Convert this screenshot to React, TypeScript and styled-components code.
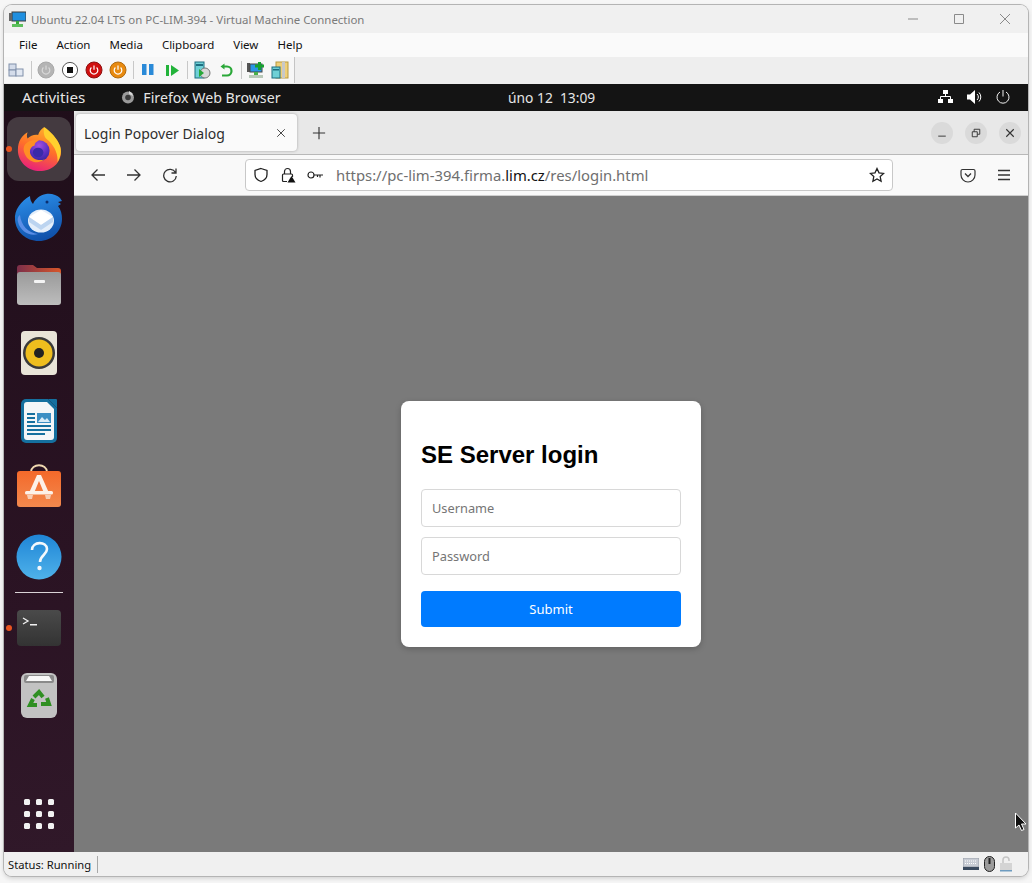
import React from 'react';
import styled, { createGlobalStyle } from 'styled-components';

const GlobalStyle = createGlobalStyle`
    html, body {
        margin: 0;
        padding: 0;
        background: #f4f4f4;
    }
    * {
        box-sizing: border-box;
    }
`;

const WIN_FONT = `"Noto Sans", "Open Sans", sans-serif`;
const UBUNTU_FONT = `"Noto Sans", "Open Sans", sans-serif`;

const Page = styled.div`
    width: 1032px;
    height: 883px;
    padding: 5px 4px 7px;
    overflow: hidden;
    background: #f6f6f6;
`;

const VmWindow = styled.div`
    position: relative;
    display: flex;
    flex-direction: column;
    height: 871px;
    border-radius: 8px;
    overflow: hidden;
    background: #f0f0f0;
    box-shadow: 0 0 0 1px #b4b4b4, 0 2px 5px rgba(0, 0, 0, 0.18);
`;

const TitleBar = styled.div`
    display: flex;
    align-items: center;
    height: 28px;
    flex: none;
    padding-left: 5px;
    background: #f0f0f0;
    font: 11.45px ${WIN_FONT};
    color: #7a7a7a;
`;

const TitleText = styled.span`
    margin-left: 5px;
    white-space: nowrap;
`;

const WinControls = styled.div`
    display: flex;
    margin-left: auto;
`;

const WinControl = styled.div`
    display: flex;
    align-items: center;
    justify-content: center;
    width: 46px;
    height: 28px;
`;

const MenuBar = styled.div`
    display: flex;
    align-items: center;
    gap: 19px;
    height: 24px;
    flex: none;
    padding: 0 0 2px 15px;
    background: #fafafa;
    font: 11.5px ${WIN_FONT};
    color: #111;
`;

const ToolStrip = styled.div`
    display: flex;
    height: 27px;
    flex: none;
    background: #eeeeee;
`;

const ToolGroup = styled.div`
    display: flex;
    align-items: center;
    height: 26px;
    padding-right: 2px;
    background: #f7f7f7;
    border-right: 1px solid #c4c4c4;
`;

const ToolSlot = styled.div`
    display: flex;
    align-items: center;
    justify-content: center;
    width: 24px;
    height: 24px;
`;

const ToolSep = styled.div`
    width: 1px;
    height: 18px;
    margin: 0 2px 0 3px;
    background: #c8c8c8;
`;

const Screen = styled.div`
    position: relative;
    display: flex;
    flex-direction: column;
    flex: 1;
    min-height: 0;
`;

const TopBar = styled.div`
    display: flex;
    align-items: center;
    position: relative;
    height: 27px;
    flex: none;
    padding: 0 0 1px 18px;
    background: #141414;
    font: 14.2px ${UBUNTU_FONT};
    color: #e6e6e6;
`;

const ActivitiesLabel = styled.span`
    font-size: 15.2px;
`;

const AppName = styled.div`
    display: flex;
    align-items: center;
    gap: 8px;
    margin-left: 36px;
`;

const Clock = styled.div`
    position: absolute;
    left: 504px;
    font-size: 13.8px;
    white-space: pre;
`;

const Tray = styled.div`
    display: flex;
    align-items: center;
    gap: 14px;
    margin-left: auto;
    margin-right: 18px;
`;

const Desktop = styled.div`
    display: flex;
    flex: 1;
    min-height: 0;
`;

const Dock = styled.div`
    display: flex;
    flex-direction: column;
    align-items: center;
    gap: 4px;
    width: 70px;
    flex: none;
    padding: 6px 0 0;
    background: linear-gradient(170deg, #1f0e1a 0%, #2a1323 60%, #301829 100%);
`;

const DockItem = styled.div<{ $active?: boolean }>`
    position: relative;
    display: flex;
    align-items: center;
    justify-content: center;
    width: 64px;
    height: 64px;
    flex: none;
    border-radius: 12px;
    background: ${({ $active }) => ($active ? '#443a40' : 'transparent')};
`;

const RunningDot = styled.span`
    position: absolute;
    left: -1px;
    top: 29px;
    width: 6px;
    height: 6px;
    border-radius: 50%;
    background: #e95420;
`;

const DockSep = styled.div`
    width: 48px;
    height: 1px;
    flex: none;
    margin: -1px 0;
    background: #d9d2d6;
`;

const AppGrid = styled.div`
    display: grid;
    grid-template-columns: repeat(3, 6px);
    grid-auto-rows: 6px;
    gap: 6px;
    margin-top: auto;
    margin-bottom: 23px;
`;

const GridDot = styled.span`
    border-radius: 1.5px;
    background: #f2f2f2;
`;

const Browser = styled.div`
    display: flex;
    flex-direction: column;
    flex: 1;
    min-width: 0;
`;

const TabBar = styled.div`
    display: flex;
    align-items: center;
    height: 44px;
    flex: none;
    padding-left: 2px;
    background: #e8e8e8;
    border-bottom: 1px solid #b8b8b8;
`;

const Tab = styled.div`
    display: flex;
    align-items: center;
    justify-content: space-between;
    width: 221px;
    height: 37px;
    padding: 1px 10px 0 8px;
    border-radius: 4px;
    background: #fafafa;
    box-shadow: 0 0 3px rgba(0, 0, 0, 0.3);
    font: 14px ${UBUNTU_FONT};
    color: #2e2e2e;
`;

const NewTab = styled.div`
    display: flex;
    margin-left: 15px;
`;

const TabControls = styled.div`
    display: flex;
    gap: 12px;
    margin-left: auto;
    margin-right: 7px;
`;

const RoundControl = styled.div`
    display: flex;
    align-items: center;
    justify-content: center;
    width: 22px;
    height: 22px;
    border-radius: 50%;
    background: #dadada;
`;

const NavBar = styled.div`
    display: flex;
    align-items: center;
    height: 41px;
    flex: none;
    padding-left: 6px;
    background: #f9f9f9;
    border-bottom: 1px solid #cfcfcf;
`;

const NavButton = styled.div`
    display: flex;
    align-items: center;
    justify-content: center;
    width: 36px;
    height: 32px;
`;

const UrlBar = styled.div`
    display: flex;
    align-items: center;
    width: 648px;
    height: 32px;
    margin-left: 57px;
    margin-right: 57px;
    padding: 0 7px 0 7px;
    border: 1px solid #c8c8c8;
    border-radius: 4px;
    background: #fff;
`;

const UrlIcons = styled.div`
    display: flex;
    align-items: center;
    gap: 11px;
    width: 83px;
    flex: none;
`;

const UrlText = styled.div`
    flex: 1;
    font: 14.85px ${UBUNTU_FONT};
    color: #6f6f6f;
    white-space: nowrap;
`;

const UrlHost = styled.span`
    color: #111;
`;

const Content = styled.div`
    display: flex;
    align-items: center;
    justify-content: center;
    flex: 1;
    background: #7a7a7a;
`;

const LoginCard = styled.form`
    display: flex;
    flex-direction: column;
    width: 300px;
    height: 246px;
    padding: 20px;
    border-radius: 8px;
    background: #fff;
    box-shadow: 0 2px 6px rgba(0, 0, 0, 0.2);
`;

const LoginTitle = styled.h2`
    margin: 20px 0 21px;
    font: bold 24px/27px "Liberation Sans", Arial, sans-serif;
    color: #000;
`;

const LoginInput = styled.input`
    width: 100%;
    height: 38px;
    flex: none;
    margin-bottom: 10px;
    padding: 0 10px;
    border: 1px solid #d8d8d8;
    border-radius: 4px;
    font: 12.8px ${UBUNTU_FONT};
    &::placeholder {
        color: #757575;
    }
`;

const SubmitButton = styled.button`
    height: 36px;
    flex: none;
    margin-top: 6px;
    border: 0;
    border-radius: 4px;
    background: #007bff;
    color: #fff;
    font: 13px ${UBUNTU_FONT};
`;

const StatusBar = styled.div`
    display: flex;
    align-items: center;
    height: 24px;
    flex: none;
    padding-left: 4px;
    background: #f0f0f0;
    font: 11.2px ${WIN_FONT};
    color: #111;
`;

const StatusSep = styled.div`
    width: 1px;
    height: 17px;
    margin-left: 6px;
    background: #a8a8a8;
`;

const StatusIcons = styled.div`
    display: flex;
    align-items: center;
    gap: 5px;
    margin-left: auto;
    margin-right: 16px;
`;

const CursorArrow = styled.svg`
    position: absolute;
    left: 1010px;
    top: 728px;
`;

const VmIcon = () => (
    <svg width="17" height="17" viewBox="0 0 17 17">
        <rect x="3" y="1" width="14" height="9" fill="#1f8fe0" stroke="#3a3a3a" />
        <rect x="0" y="2" width="3" height="8" fill="#666" />
        <rect x="7" y="10" width="3" height="3" fill="#38a838" />
        <rect x="3" y="13" width="11" height="3" fill="#5cbf5c" />
    </svg>
);

const Snapshot = () => (
    <svg width="16" height="14" viewBox="0 0 16 14">
        <rect x="1" y="1" width="7" height="6" fill="#d4dcea" stroke="#8090aa" />
        <rect x="1" y="7" width="7" height="6" fill="#d4dcea" stroke="#8090aa" />
        <rect x="8" y="6" width="7" height="7" fill="#e2e8f2" stroke="#8090aa" />
    </svg>
);

const PowerDisc = ({ fill, ring, glyph }: { fill: string; ring: string; glyph: string }) => (
    <svg width="18" height="18" viewBox="0 0 18 18">
        <circle cx="9" cy="9" r="8" fill={fill} stroke={ring} />
        <path d="M6.4 6.5a3.8 3.8 0 1 0 5.2 0" fill="none" stroke={glyph} strokeWidth="1.2" />
        <path d="M9 4.5v4.2" stroke={glyph} strokeWidth="1.2" />
    </svg>
);

const StopDisc = () => (
    <svg width="18" height="18" viewBox="0 0 18 18">
        <circle cx="9" cy="9" r="7.6" fill="#fff" stroke="#555" />
        <rect x="6" y="6" width="6" height="6" fill="#111" />
    </svg>
);

const Pause = () => (
    <svg width="16" height="14" viewBox="0 0 16 14">
        <rect x="2" y="1" width="4.5" height="11" fill="#2a8ad8" />
        <rect x="9" y="1" width="4.5" height="11" fill="#2a8ad8" />
    </svg>
);

const Resume = () => (
    <svg width="15" height="13" viewBox="0 0 15 13">
        <rect x="1" y="1" width="3" height="11" fill="#22b33a" />
        <path d="M6 1l8 5.5-8 5.5z" fill="#22b33a" />
    </svg>
);

const Checkpoint = () => (
    <svg width="17" height="18" viewBox="0 0 17 18">
        <rect x="1" y="1" width="9" height="16" fill="#6fd0d6" stroke="#1e6e80" />
        <rect x="2" y="3" width="7" height="2" fill="#1e6e80" />
        <circle cx="11" cy="12" r="5" fill="#d8d8d8" stroke="#777" />
        <path d="M5 8l5 4-5 4z" fill="#28a838" />
    </svg>
);

const Revert = () => (
    <svg width="14" height="15" viewBox="0 0 14 15">
        <path d="M4 3.5h4a4 4 0 0 1 0 9H3" fill="none" stroke="#2aa838" strokeWidth="2.2" />
        <path d="M5.5 0.5L1.5 3.5l4 3z" fill="#2aa838" />
    </svg>
);

const Enhanced = () => (
    <svg width="18" height="18" viewBox="0 0 18 18">
        <rect x="0" y="2" width="3" height="9" fill="#555" />
        <rect x="3" y="3" width="12" height="8" fill="#2a96e6" stroke="#444" />
        <rect x="7" y="11" width="4" height="3" fill="#4ab04a" />
        <rect x="2" y="14" width="14" height="3" fill="#b8c8b8" />
        <path d="M11 1h3v2.5h3v3h-3V9h-3V6.500H8v-3h3z" fill="#18a030" />
    </svg>
);

const ShareVm = () => (
    <svg width="18" height="18" viewBox="0 0 18 18">
        <rect x="5" y="1" width="12" height="16" fill="#f0d078" stroke="#b89a40" />
        <rect x="11" y="1" width="3" height="16" fill="#c8c8c8" />
        <rect x="1" y="6" width="8" height="11" fill="#6fd0d6" stroke="#1e6e80" />
        <rect x="2" y="8" width="6" height="1.500" fill="#1e6e80" />
    </svg>
);

const Firefox = () => (
    <svg width="44" height="44" viewBox="0 0 50 50">
        <defs>
            <linearGradient id="ffBody" x1="0.7" y1="0" x2="0.35" y2="1">
                <stop offset="0" stopColor="#ffb52a" />
                <stop offset="0.5" stopColor="#ff6f2a" />
                <stop offset="1" stopColor="#e81f7c" />
            </linearGradient>
            <radialGradient id="ffCore" cx="0.5" cy="0.25" r="0.85">
                <stop offset="0" stopColor="#a34fe0" />
                <stop offset="0.55" stopColor="#5a2fc0" />
                <stop offset="1" stopColor="#2f2490" />
            </radialGradient>
        </defs>
        <path d="M31 0c-1 5 0 9 3 11 4 2 7 1 8 0 4 4 8 10 8 17 0 13 -11 22 -24 22S1 40 1 26C1 16 6 9 12 6c-1 3 -1 5 0 7 3 -3 8 -5 12 -4 1 -4 4 -7 7 -9z" fill="url(#ffBody)" />
        <path d="M31 0c7 5 15 13 18 22 2 7 0 13 -3 18 1 -10 -4 -20 -13 -27 -3 -3 -3 -9 -2 -13z" fill="#ffd02e" />
        <circle cx="25" cy="27" r="12" fill="url(#ffCore)" />
        <ellipse cx="24" cy="29" rx="6" ry="5.500" fill="#3a2aa8" />
        <path d="M9 20c4 -5 10 -6 16 -5 -3 2 -5 3 -5 6 -4 1 -6 5 -5 9 2 6 9 9 16 7 -7 6 -18 3 -22 -6 -2 -4 -2 -8 0 -11z" fill="#ff8f24" />
    </svg>
);

const Thunderbird = () => (
    <svg width="50" height="48" viewBox="0 0 50 48">
        <defs>
            <linearGradient id="tbBody" x1="0.3" y1="0" x2="0.6" y2="1">
                <stop offset="0" stopColor="#2a8de8" />
                <stop offset="1" stopColor="#0f4fa8" />
            </linearGradient>
        </defs>
        <path d="M46 5c-3 -3 -9 -5 -14 -4 -6 1 -11 5 -13 10 -2 -2 -3 -5 -3 -8 -9 5 -16 14 -15 24 1 12 11 21 24 21 13 0 23 -10 23 -22 0 -5 -1 -9 -4 -13l3 -2 -3 -2 4 -1z" fill="url(#tbBody)" />
        <path d="M6 22c1 10 8 18 18 19 -8 3 -18 -3 -20 -12 -1 -3 0 -6 2 -7z" fill="#5a8ee6" />
        <ellipse cx="27" cy="28" rx="13" ry="11.500" fill="#e4eefa" />
        <path d="M15 24l12 8 12 -8 -12 -7z" fill="#ffffff" />
        <path d="M15 24l12 8 12 -8v5l-12 8 -12 -8z" fill="#bcd4f0" />
        <circle cx="33" cy="9" r="1.500" fill="#0c2f70" />
    </svg>
);

const Files = () => (
    <svg width="46" height="42" viewBox="0 0 46 42">
        <defs>
            <linearGradient id="fTab" x1="0" y1="0" x2="1" y2="0">
                <stop offset="0" stopColor="#7c2f4a" />
                <stop offset="1" stopColor="#d8562a" />
            </linearGradient>
            <linearGradient id="fBody" x1="0" y1="0" x2="0" y2="1">
                <stop offset="0" stopColor="#9a9a9a" />
                <stop offset="1" stopColor="#bdbdbd" />
            </linearGradient>
        </defs>
        <path d="M1 4a3 3 0 0 1 3 -3h13l4 3h21a3 3 0 0 1 3 3v10H1z" fill="url(#fTab)" />
        <rect x="1" y="8" width="44" height="33" rx="3" fill="url(#fBody)" />
        <rect x="18" y="16" width="11" height="3" rx="1" fill="#f4f4f4" />
    </svg>
);

const Rhythmbox = () => (
    <svg width="38" height="46" viewBox="0 0 38 46">
        <rect x="1" y="1" width="36" height="44" rx="4" fill="#e9e4d8" />
        <circle cx="19" cy="23" r="16" fill="#3a3a3a" />
        <circle cx="19" cy="23" r="13.500" fill="#efbe1e" />
        <circle cx="19" cy="23" r="5" fill="#222" />
    </svg>
);

const Writer = () => (
    <svg width="38" height="46" viewBox="0 0 38 46">
        <path d="M6 1h22l9 9v30a5 5 0 0 1 -5 5H6a5 5 0 0 1 -5 -5V6a5 5 0 0 1 5 -5z" fill="#15709f" />
        <path d="M7 4h20l7 7v28a3 3 0 0 1 -3 3H7a3 3 0 0 1 -3 -3V7a3 3 0 0 1 3 -3z" fill="#f3f6f8" />
        <path d="M28 1l9 9V2a1 1 0 0 0 -1 -1z" fill="#15709f" />
        <rect x="7" y="15" width="8" height="2" fill="#15709f" />
        <rect x="7" y="19" width="8" height="2" fill="#15709f" />
        <rect x="7" y="23" width="8" height="2" fill="#15709f" />
        <rect x="7" y="27" width="24" height="2" fill="#15709f" />
        <rect x="7" y="31" width="24" height="2" fill="#15709f" />
        <rect x="7" y="35" width="18" height="2" fill="#15709f" />
        <rect x="17" y="15" width="14" height="10" fill="#3b8fc4" />
        <path d="M18 24l4 -5 3 3 2 -2 3 4z" fill="#d8ecf8" />
    </svg>
);

const SoftwareStore = () => (
    <svg width="46" height="50" viewBox="0 0 46 50">
        <defs>
            <linearGradient id="bag" x1="0" y1="0" x2="0" y2="1">
                <stop offset="0" stopColor="#f4692a" />
                <stop offset="1" stopColor="#f2894e" />
            </linearGradient>
        </defs>
        <path d="M15 8c0 -9 16 -9 16 0" fill="none" stroke="#f0d8b0" strokeWidth="1.800" />
        <rect x="1" y="7" width="44" height="36" rx="3" fill="url(#bag)" />
        <path d="M21 11h4l8 18h-5l-5 -12 -5 12h-5z" fill="#fdf1e8" />
        <rect x="9" y="27" width="28" height="3.500" rx="1.500" fill="#fdf1e8" />
        <path d="M11 31h6l-1 4h-4zM29 31h6l-1 4h-4z" fill="#f6cdb4" />
    </svg>
);

const HelpBall = () => (
    <svg width="46" height="46" viewBox="0 0 46 46">
        <defs>
            <linearGradient id="helpFill" x1="0" y1="0" x2="0" y2="1">
                <stop offset="0" stopColor="#1f85d6" />
                <stop offset="1" stopColor="#4fb2ea" />
            </linearGradient>
        </defs>
        <circle cx="23" cy="23" r="22.500" fill="url(#helpFill)" />
        <path d="M16 16c0 -9 15 -9 15 -1 0 6 -7 6 -7 13" fill="none" stroke="#f4f8fc" strokeWidth="2.600" />
        <circle cx="23.500" cy="34" r="2.200" fill="#f4f8fc" />
    </svg>
);

const Terminal = () => (
    <svg width="46" height="36" viewBox="0 0 46 36">
        <defs>
            <linearGradient id="termFill" x1="0" y1="0" x2="0" y2="1">
                <stop offset="0" stopColor="#4a4a4a" />
                <stop offset="1" stopColor="#333" />
            </linearGradient>
        </defs>
        <rect x="1" y="0" width="44" height="36" rx="4" fill="url(#termFill)" />
        <path d="M7 8l5 3 -5 3" fill="none" stroke="#f0f0f0" strokeWidth="1.300" />
        <rect x="14" y="14" width="7" height="1.500" fill="#f0f0f0" />
    </svg>
);

const Trash = () => (
    <svg width="36" height="46" viewBox="0 0 36 46">
        <rect x="0" y="0" width="36" height="45" rx="6" fill="#c2c2c2" />
        <rect x="3" y="2" width="30" height="8" rx="2" fill="#8a8a8a" />
        <path d="M5 8l3 -5h20l3 5z" fill="#f8f8f8" />
        <g fill="none" stroke="#2f8f22" strokeWidth="4">
            <path d="M13 24l5 -5 4 5" />
            <path d="M26 25l2 6h-8" />
            <path d="M16 32h-7l3 -6" />
        </g>
    </svg>
);

const NetworkTray = () => (
    <svg width="15" height="14" viewBox="0 0 15 14">
        <rect x="5" y="0" width="5" height="4" fill="#fff" />
        <rect x="0" y="9" width="5" height="4" fill="#fff" />
        <rect x="10" y="9" width="5" height="4" fill="#fff" />
        <path d="M7.500 4v3M2.500 9V6.500h10V9" fill="none" stroke="#fff" />
    </svg>
);

const VolumeTray = () => (
    <svg width="15" height="14" viewBox="0 0 15 14">
        <path d="M0 4.500h3L8 0v14L3 9.500H0z" fill="#fff" />
        <path d="M10 4a4 4 0 0 1 0 6M12 2.500a6.500 6.500 0 0 1 0 9" fill="none" stroke="#fff" />
    </svg>
);

const PowerTray = () => (
    <svg width="14" height="14" viewBox="0 0 14 14">
        <path d="M4 2a6 6 0 1 0 6 0" fill="none" stroke="#f0f0f0" />
        <path d="M7 0v6.500" stroke="#f0f0f0" />
    </svg>
);

const Line = ({ d, size = 16, color = '#333', width = 1.3 }: { d: string; size?: number; color?: string; width?: number }) => (
    <svg width={size} height={size} viewBox="0 0 16 16">
        <path d={d} fill="none" stroke={color} strokeWidth={width} />
    </svg>
);

const MENU_ITEMS = ['File', 'Action', 'Media', 'Clipboard', 'View', 'Help'];

const App = () => (
    <Page>
        <GlobalStyle />
        <VmWindow>
            <TitleBar>
                <VmIcon />
                <TitleText>Ubuntu 22.04 LTS on PC-LIM-394 - Virtual Machine Connection</TitleText>
                <WinControls>
                    <WinControl>
                        <Line d="M3 8h10" color="#8a8a8a" width={1} />
                    </WinControl>
                    <WinControl>
                        <Line d="M3.500 3.500h9v9h-9z" color="#8a8a8a" width={1} />
                    </WinControl>
                    <WinControl>
                        <Line d="M3 3l10 10M13 3L3 13" color="#8a8a8a" width={1} />
                    </WinControl>
                </WinControls>
            </TitleBar>
            <MenuBar>
                {MENU_ITEMS.map((item) => (
                    <span key={item}>{item}</span>
                ))}
            </MenuBar>
            <ToolStrip>
                <ToolGroup>
                    <ToolSlot>
                        <Snapshot />
                    </ToolSlot>
                    <ToolSep />
                    <ToolSlot>
                        <PowerDisc fill="#b4b4b4" ring="#a8a8a8" glyph="#d8d8d8" />
                    </ToolSlot>
                    <ToolSlot>
                        <StopDisc />
                    </ToolSlot>
                    <ToolSlot>
                        <PowerDisc fill="#d01010" ring="#8c1010" glyph="#fff" />
                    </ToolSlot>
                    <ToolSlot>
                        <PowerDisc fill="#e88a10" ring="#b06a10" glyph="#fff" />
                    </ToolSlot>
                    <ToolSep />
                    <ToolSlot>
                        <Pause />
                    </ToolSlot>
                    <ToolSlot>
                        <Resume />
                    </ToolSlot>
                    <ToolSep />
                    <ToolSlot>
                        <Checkpoint />
                    </ToolSlot>
                    <ToolSlot>
                        <Revert />
                    </ToolSlot>
                    <ToolSep />
                    <ToolSlot>
                        <Enhanced />
                    </ToolSlot>
                    <ToolSlot>
                        <ShareVm />
                    </ToolSlot>
                </ToolGroup>
            </ToolStrip>
            <Screen>
                <TopBar>
                    <ActivitiesLabel>Activities</ActivitiesLabel>
                    <AppName>
                        <svg width="14" height="14" viewBox="0 0 14 14">
                            <circle cx="7" cy="7.500" r="6" fill="#9a9a9a" />
                            <circle cx="7" cy="7.500" r="2.800" fill="#3a3a3a" />
                            <path d="M8 1l3 2 1 3-4-2z" fill="#d8d8d8" />
                        </svg>
                        <span>Firefox Web Browser</span>
                    </AppName>
                    <Clock>úno 12  13:09</Clock>
                    <Tray>
                        <NetworkTray />
                        <VolumeTray />
                        <PowerTray />
                    </Tray>
                </TopBar>
                <Desktop>
                    <Dock>
                        <DockItem $active>
                            <RunningDot />
                            <Firefox />
                        </DockItem>
                        <DockItem>
                            <Thunderbird />
                        </DockItem>
                        <DockItem>
                            <Files />
                        </DockItem>
                        <DockItem>
                            <Rhythmbox />
                        </DockItem>
                        <DockItem>
                            <Writer />
                        </DockItem>
                        <DockItem>
                            <SoftwareStore />
                        </DockItem>
                        <DockItem>
                            <HelpBall />
                        </DockItem>
                        <DockSep />
                        <DockItem>
                            <RunningDot />
                            <Terminal />
                        </DockItem>
                        <DockItem>
                            <Trash />
                        </DockItem>
                        <AppGrid>
                            {Array.from({ length: 9 }, (_, i) => (
                                <GridDot key={i} />
                            ))}
                        </AppGrid>
                    </Dock>
                    <Browser>
                        <TabBar>
                            <Tab>
                                <span>Login Popover Dialog</span>
                                <Line size={12} d="M3 3l10 10M13 3L3 13" color="#444" />
                            </Tab>
                            <NewTab>
                                <Line size={14} d="M8 1v14M1 8h14" color="#333" />
                            </NewTab>
                            <TabControls>
                                <RoundControl>
                                    <Line size={10} d="M2 13h12" width={1.500} />
                                </RoundControl>
                                <RoundControl>
                                    <Line size={10} d="M2 6h8v8H2zM5 6V2h9v8h-4" width={1.500} />
                                </RoundControl>
                                <RoundControl>
                                    <Line size={10} d="M2 2l12 12M14 2L2 14" width={1.800} />
                                </RoundControl>
                            </TabControls>
                        </TabBar>
                        <NavBar>
                            <NavButton>
                                <Line d="M15 8H2M7.500 2.500L2 8l5.500 5.500" />
                            </NavButton>
                            <NavButton>
                                <Line d="M1 8h13M8.500 2.500L14 8l-5.500 5.500" />
                            </NavButton>
                            <NavButton>
                                <Line d="M13.500 5.500A6.300 6.300 0 1 0 14.300 9M14 1.500v4.500H9.500" />
                            </NavButton>
                            <UrlBar>
                                <UrlIcons>
                                    <Line d="M8 1.500l6 2v4c0 3.500-3 6-6 7-3-1-6-3.500-6-7v-4z" color="#222" />
                                    <svg width="16" height="16" viewBox="0 0 16 16">
                                        <path d="M4.500 7V4.500a3 3 0 0 1 6 0V7M3.500 7h8a1 1 0 0 1 1 1v2M7 14.500H3.500a1 1 0 0 1-1-1V8a1 1 0 0 1 1-1" fill="none" stroke="#222" strokeWidth="1.200" />
                                        <path d="M11.500 9l4 6.500H7.500z" fill="#111" />
                                    </svg>
                                    <svg width="16" height="10" viewBox="0 0 16 10">
                                        <circle cx="4" cy="5" r="3" fill="none" stroke="#222" strokeWidth="1.200" />
                                        <path d="M7 5h9M13 5v2.500M10.500 5v2" stroke="#222" strokeWidth="1.200" fill="none" />
                                    </svg>
                                </UrlIcons>
                                <UrlText>
                                    https://pc-lim-394.firma.<UrlHost>lim.cz</UrlHost>/res/login.html
                                </UrlText>
                                <Line d="M8 1.500l2 4.300 4.700.6-3.500 3.200.9 4.700L8 12l-4.100 2.300.9-4.700L1.300 6.400 6 5.800z" color="#222" />
                            </UrlBar>
                            <NavButton>
                                <svg width="16" height="16" viewBox="0 0 16 16">
                                    <path d="M2.500 2.500h11a1.500 1.500 0 0 1 1.500 1.500v4a7 7 0 0 1-14 0V4a1.500 1.500 0 0 1 1.500-1.500z" fill="none" stroke="#333" strokeWidth="1.200" />
                                    <path d="M5 6.500L8 9.500l3-3" fill="none" stroke="#333" strokeWidth="1.300" />
                                </svg>
                            </NavButton>
                            <NavButton>
                                <Line d="M2 3.500h12M2 8h12M2 12.500h12" />
                            </NavButton>
                        </NavBar>
                        <Content>
                            <LoginCard>
                                <LoginTitle>SE Server login</LoginTitle>
                                <LoginInput placeholder="Username" />
                                <LoginInput placeholder="Password" type="password" />
                                <SubmitButton type="button">Submit</SubmitButton>
                            </LoginCard>
                        </Content>
                    </Browser>
                </Desktop>
                <CursorArrow width="14" height="20" viewBox="0 0 14 20">
                    <path d="M1.500 1v15l3.500-3 2.500 5.500 2.500-1-2.500-5.500h4.500z" fill="#111" stroke="#fff" />
                </CursorArrow>
            </Screen>
            <StatusBar>
                <span>Status: Running</span>
                <StatusSep />
                <StatusIcons>
                    <svg width="16" height="12" viewBox="0 0 16 12">
                        <rect x="0" y="0" width="16" height="9" fill="#c8ccd4" stroke="#9aa0aa" />
                        <path d="M2 3h12M2 5.500h12" stroke="#fff" strokeDasharray="1 1" />
                        <rect x="0" y="9" width="16" height="3" fill="#3a4a5e" />
                    </svg>
                    <svg width="11" height="16" viewBox="0 0 11 16">
                        <rect x="0.500" y="0.500" width="10" height="15" rx="5" fill="#9a9a9a" stroke="#222" />
                        <rect x="4.500" y="2" width="2" height="6" fill="#222" />
                    </svg>
                    <svg width="12" height="16" viewBox="0 0 12 16">
                        <path d="M3 7V4a3 3 0 0 1 6 0v1" fill="none" stroke="#c4c4c4" strokeWidth="1.500" />
                        <rect x="0" y="7" width="12" height="7" fill="#d4d4d4" />
                        <rect x="0" y="14" width="12" height="1.500" fill="#6e9cc0" />
                    </svg>
                </StatusIcons>
            </StatusBar>
        </VmWindow>
    </Page>
);

export default App;
